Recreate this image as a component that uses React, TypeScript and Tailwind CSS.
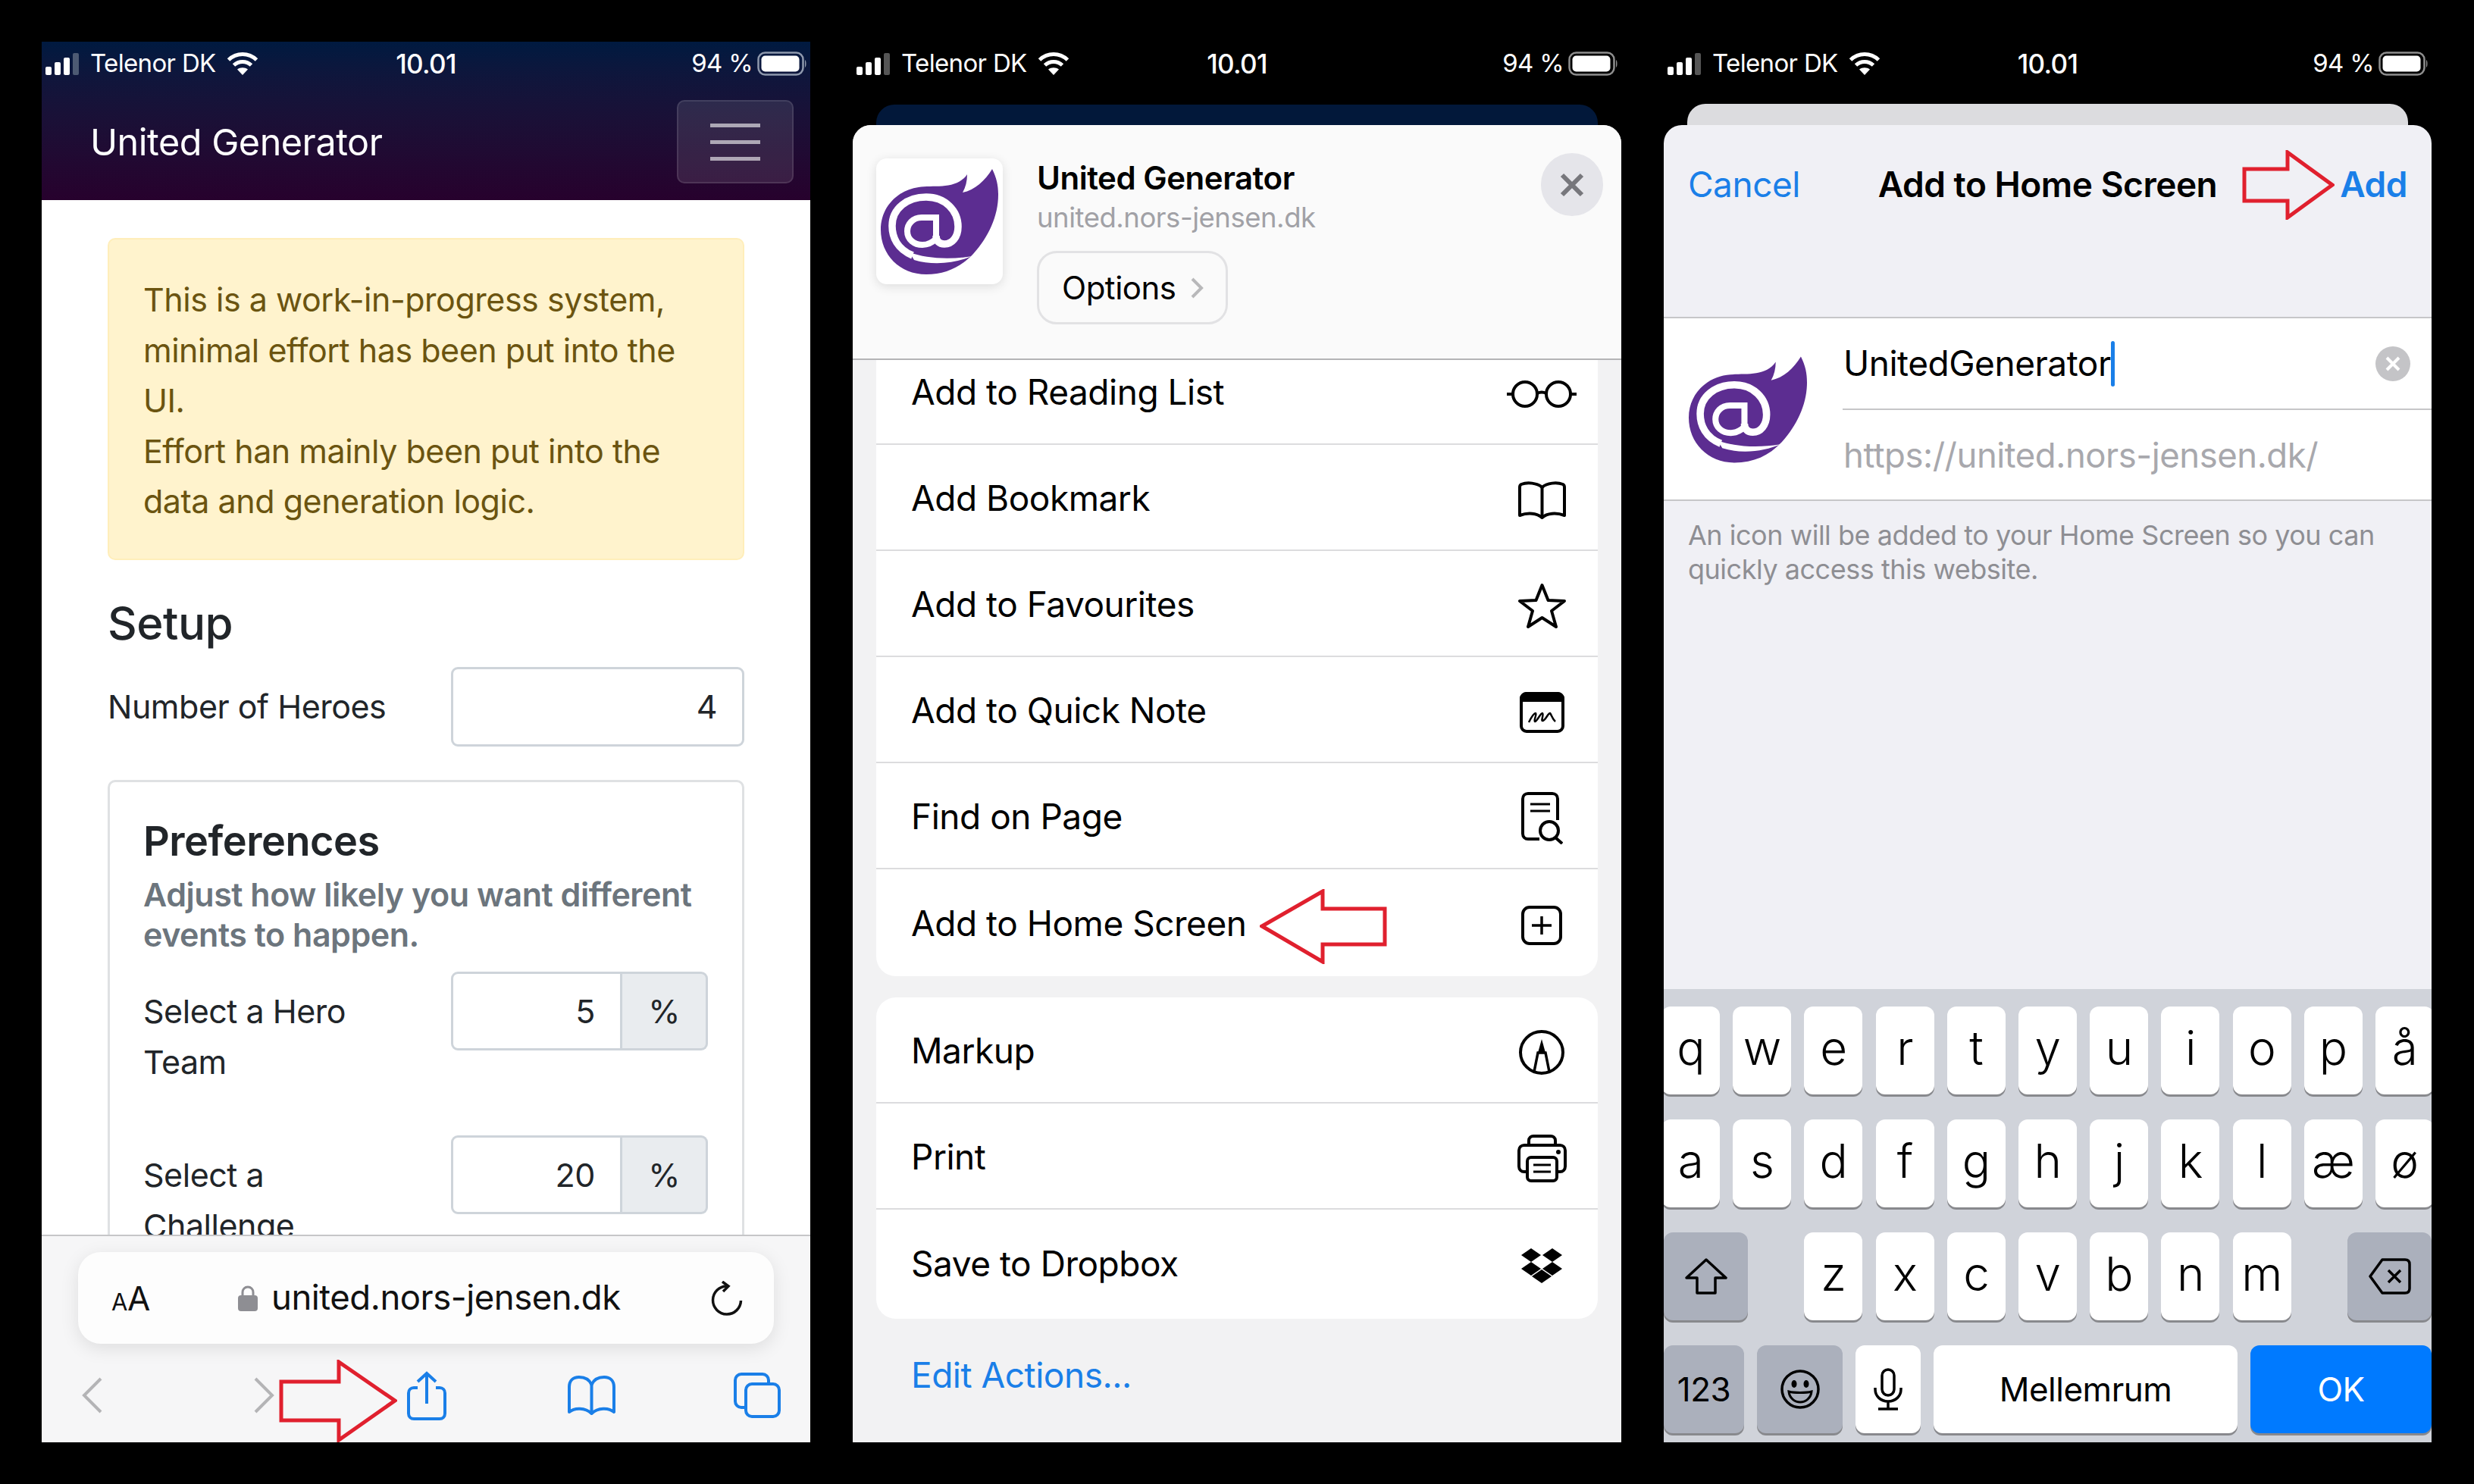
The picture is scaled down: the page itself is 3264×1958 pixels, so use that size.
import type { ReactNode } from "react";

function Signal({ dim }: { dim: string }) {
  return (
    <svg width="48" height="32" viewBox="0 0 48 32">
      <rect x="1" y="20" width="8" height="11" rx="2" fill="#fff" />
      <rect x="13" y="14" width="8" height="17" rx="2" fill="#fff" />
      <rect x="25" y="8" width="8" height="23" rx="2" fill="#fff" />
      <rect x="37" y="2" width="8" height="29" rx="2" fill={dim} />
    </svg>
  );
}

function Wifi() {
  return (
    <svg width="42" height="32" viewBox="0 0 42 32" fill="none" stroke="#fff" strokeWidth="5">
      <path d="M2.5 11 C13 1 29 1 39.5 11" />
      <path d="M9.5 18 C16 12 26 12 32.5 18" />
      <path d="M21 31 L14 23.5 C18 20.5 24 20.5 28 23.5 Z" fill="#fff" stroke="none" />
    </svg>
  );
}

function Battery({ ring }: { ring: string }) {
  return (
    <svg width="66" height="32" viewBox="0 0 66 32">
      <rect x="1.5" y="1.5" width="59" height="29" rx="9" fill="none" stroke={ring} strokeWidth="2.5" />
      <rect x="5.5" y="5.5" width="50" height="21" rx="5" fill="#fff" />
      <path d="M63 11 C65 12 65 20 63 21 Z" fill={ring} />
    </svg>
  );
}

function StatusBar({ dim, ring }: { dim: string; ring: string }) {
  return (
    <div className="grid h-[56px] shrink-0 grid-cols-3 items-center pt-[2px] text-[33px] tracking-[-0.02em] text-white">
      <div className="flex items-center pl-[4px]">
        <Signal dim={dim} />
        <span className="ml-[12px]">Telenor DK</span>
        <span className="ml-[14px] flex">
          <Wifi />
        </span>
      </div>
      <div className="text-center text-[35px] font-medium">10.01</div>
      <div className="flex items-center justify-end pr-[4px]">
        <span className="mr-[6px]">94 %</span>
        <Battery ring={ring} />
      </div>
    </div>
  );
}

function RedArrow({ points, w, h, className }: { points: string; w: number; h: number; className: string }) {
  return (
    <svg width={w} height={h} viewBox={`0 0 ${w} ${h}`} className={className} fill="none" stroke="#e0202e" strokeWidth="5">
      <polygon points={points} />
    </svg>
  );
}

function BlazorLogo({ className }: { className?: string }) {
  return (
    <svg viewBox="0 0 155 139" className={className}>
      <path
        d="M147 0 C153 12 155 22 155 34 C155 62 142 90 122 112 C105 130 85 139 60 139 C25 139 0 113 0 80 C0 50 22 28 50 24 C70 21 100 28 114 7 C114 16 112 24 108 31 C124 28 138 15 147 0 Z"
        fill="#5c2d91"
      />
      <g fill="none" stroke="#fff">
        <path d="M42 114 C22 106 15 90 15 75 C15 52 35 37 60 37 C85 37 102 55 102 76 C102 90 94 99 84 99 C77 99 73 95 73 88" strokeWidth="9.5" />
        <path d="M73 92 V64 H54 C42 64 35 73 35 82 C35 93 44 100 55 100 C62 100 68 97 73 92" strokeWidth="8" />
      </g>
      <path d="M120 115 C100 124 70 128 44 120 L38 110 C60 118 90 120 120 115 Z" fill="#fff" />
    </svg>
  );
}

function IconGlasses() {
  return (
    <svg width="92" height="38" viewBox="0 0 92 38" fill="none" stroke="#000" strokeWidth="4">
      <circle cx="24" cy="19" r="16" />
      <circle cx="68" cy="19" r="16" />
      <path d="M40 18 C44 16 48 16 52 18 M0 19 H8 M84 19 H92" />
    </svg>
  );
}

function IconBook() {
  return (
    <svg width="65" height="51" viewBox="0 0 65 51" fill="none" stroke="#000" strokeWidth="4" strokeLinejoin="round">
      <path d="M32.5 9 C26 3 13 2 5 5 C3 6 3 7 3 9 V46 C14 42 26 43 32.5 49 C39 43 51 42 62 46 V9 C62 7 62 6 60 5 C52 2 39 3 32.5 9 Z" />
      <path d="M32.5 9 V49" />
    </svg>
  );
}

function IconBookBlue() {
  return (
    <svg width="65" height="53" viewBox="0 0 65 53" fill="none" stroke="#1a7fe8" strokeWidth="4" strokeLinejoin="round">
      <path d="M32.5 12 C30 6 24 2 16 2 C8 2 3 7 3 15 V48 C10 42 24 42 32.5 50 C41 42 55 42 62 48 V15 C62 7 57 2 49 2 C41 2 35 6 32.5 12 Z" />
      <path d="M32.5 12 V50" />
    </svg>
  );
}

function IconStar() {
  return (
    <svg width="65" height="61" viewBox="0 0 65 61" fill="none" stroke="#000" strokeWidth="4" strokeLinejoin="round">
      <polygon points="32.5,3 40.5,23 62,24 45,37 51,58 32.5,46 14,58 20,37 3,24 24.5,23" />
    </svg>
  );
}

function IconNote() {
  return (
    <svg width="59" height="54" viewBox="0 0 59 54" fill="none" stroke="#000" strokeWidth="4">
      <rect x="2" y="2" width="55" height="50" rx="7" />
      <path d="M9 0 H50 C55 0 59 4 59 9 V13 H0 V9 C0 4 4 0 9 0 Z" fill="#000" stroke="none" />
      <path d="M12 40 C15 34 19 28 21 28 C23 29 18 38 20 39 C23 39 27 28 30 28 C32 29 28 38 30 38 C34 38 37 28 40 28 C42 30 43 36 47 39" strokeWidth="2.5" />
    </svg>
  );
}

function IconFind() {
  return (
    <svg width="55" height="69" viewBox="0 0 55 69" fill="none" stroke="#000" strokeWidth="4">
      <path d="M24 62 H9 C5 62 2 59 2 55 V9 C2 5 5 2 9 2 H41 C45 2 48 5 48 9 V37" />
      <path d="M12 16 H38 M12 25 H38" strokeWidth="3" />
      <circle cx="37" cy="51" r="12" />
      <path d="M45 60 L54 68" />
    </svg>
  );
}

function IconPlus() {
  return (
    <svg width="54" height="52" viewBox="0 0 54 52" fill="none" stroke="#000" strokeWidth="4">
      <rect x="2" y="2" width="50" height="48" rx="9" />
      <path d="M14 26 H40 M27 14 V38" strokeWidth="3.5" />
    </svg>
  );
}

function IconMarkup() {
  return (
    <svg width="60" height="59" viewBox="0 0 60 59" fill="none" stroke="#000" strokeWidth="4">
      <ellipse cx="30" cy="29.5" rx="28" ry="27.5" />
      <path d="M20 55 L25 30 H35 L40 55" strokeWidth="3.5" />
      <path d="M25 30 L30 12 L35 30 Z" fill="#000" stroke="none" />
    </svg>
  );
}

function IconPrint() {
  return (
    <svg width="65" height="63" viewBox="0 0 65 63" fill="none" stroke="#000" strokeWidth="4">
      <path d="M12 49 H9 C5 49 2 46 2 42 V21 C2 17 5 14 9 14 H56 C60 14 63 17 63 21 V42 C63 46 60 49 56 49 H53" />
      <path d="M15 14 V8 C15 4 18 2 21 2 H44 C47 2 50 4 50 8 V14" />
      <rect x="13" y="30" width="39" height="31" rx="5" fill="#fff" />
      <path d="M21 40 H44 M21 49 H44" strokeWidth="3" />
      <circle cx="54" cy="23" r="3" fill="#000" stroke="none" />
    </svg>
  );
}

function IconDropbox() {
  return (
    <svg width="56" height="46" viewBox="0 0 56 46" fill="#000">
      <polygon points="14,0 27,9 14,18 1,9" />
      <polygon points="42,0 55,9 42,18 29,9" />
      <polygon points="14,18 27,27 14,36 1,27" />
      <polygon points="42,18 55,27 42,36 29,27" />
      <polygon points="28,28 41,37 28,46 15,37" />
    </svg>
  );
}

function IconShare() {
  return (
    <svg width="52" height="65" viewBox="0 0 52 65" fill="none" stroke="#1a7fe8" strokeWidth="4">
      <path d="M14 22 H9 C5 22 2 25 2 29 V56 C2 60 5 63 9 63 H43 C47 63 50 60 50 56 V29 C50 25 47 22 43 22 H38" />
      <path d="M26 3 V43 M14 14 L26 3 L38 14" />
    </svg>
  );
}

function IconTabs() {
  return (
    <svg width="62" height="60" viewBox="0 0 62 60" fill="none" stroke="#1a7fe8" strokeWidth="4">
      <rect x="2" y="2" width="44" height="44" rx="8" />
      <rect x="16" y="15" width="44" height="43" rx="8" fill="#f6f6f7" />
    </svg>
  );
}

function IconReload() {
  return (
    <svg width="42" height="46" viewBox="0 0 42 46" fill="none" stroke="#111" strokeWidth="3.5">
      <path d="M21 7 A18.5 18.5 0 1 0 39.5 26" />
      <path d="M15 1 L23 7 L16 14" />
    </svg>
  );
}

function IconChevron({ flip }: { flip?: boolean }) {
  return (
    <svg width="28" height="50" viewBox="0 0 28 50" fill="none" stroke="#b4b4b6" strokeWidth="4">
      <path d={flip ? "M3 3 L25 25 L3 47" : "M25 3 L3 25 L25 47"} />
    </svg>
  );
}

function IconLock() {
  return (
    <svg width="26" height="34" viewBox="0 0 26 34" fill="none">
      <path d="M6 15 V9 C6 5 9 2 13 2 C17 2 20 5 20 9 V15" stroke="#8e8e93" strokeWidth="3" />
      <rect x="0" y="13" width="26" height="21" rx="4" fill="#8e8e93" />
    </svg>
  );
}

function IconShift() {
  return (
    <svg width="56" height="48" viewBox="0 0 56 48" fill="none" stroke="#000" strokeWidth="3.5" strokeLinejoin="round">
      <path d="M28 2 L54 26 H40 V46 H16 V26 H2 Z" />
    </svg>
  );
}

function IconDelete() {
  return (
    <svg width="56" height="48" viewBox="0 0 56 48" fill="none" stroke="#000" strokeWidth="3.5" strokeLinejoin="round">
      <path d="M18 2 H48 C52 2 54 4 54 8 V40 C54 44 52 46 48 46 H18 L2 24 Z" />
      <path d="M26 16 L42 32 M42 16 L26 32" />
    </svg>
  );
}

function IconEmoji() {
  return (
    <svg width="52" height="52" viewBox="0 0 52 52" fill="none" stroke="#000" strokeWidth="3.5">
      <circle cx="26" cy="26" r="24" />
      <ellipse cx="18" cy="19" rx="3.5" ry="5" fill="#000" stroke="none" />
      <ellipse cx="34" cy="19" rx="3.5" ry="5" fill="#000" stroke="none" />
      <path d="M11 29 C18 31 34 31 41 29 C40 38 33 43 26 43 C19 43 12 38 11 29 Z" strokeWidth="3" />
    </svg>
  );
}

function IconMic() {
  return (
    <svg width="38" height="56" viewBox="0 0 38 56" fill="none" stroke="#000" strokeWidth="3.5">
      <rect x="11" y="2" width="16" height="34" rx="8" />
      <path d="M2 26 V28 C2 37 9 44 19 44 C29 44 36 37 36 28 V26 M19 44 V54 M6 54 H32" />
    </svg>
  );
}

function SafariPhone() {
  return (
    <div className="relative flex h-[1848px] w-[1014px] flex-col overflow-hidden">
      <div className="flex h-[209px] shrink-0 flex-col bg-gradient-to-b from-[#001a40] to-[#27012d]">
        <StatusBar dim="#4d5a73" ring="#8f99ad" />
        <div className="flex flex-1 items-start justify-between pl-[64px] pr-[22px] pt-[21px]">
          <span className="mt-[26px] text-[48.5px] leading-[60px] text-white">United Generator</span>
          <div className="flex h-[110px] w-[154px] flex-col items-center justify-center gap-[17px] rounded-[10px] border-2 border-white/10 bg-white/10">
            <span className="h-[5px] w-[66px] bg-white/60" />
            <span className="h-[5px] w-[66px] bg-white/60" />
            <span className="h-[5px] w-[66px] bg-white/60" />
          </div>
        </div>
      </div>

      <div className="h-[1365px] shrink-0 overflow-hidden bg-white px-[87px] pt-[50px] text-[43px] text-[#212529]">
        <div className="h-[425px] rounded-[10px] border-2 border-[#ffeeba] bg-[#fff3cd] px-[45px] pt-[46px] leading-[66.5px] text-[#6b5410]">
          This is a work-in-progress system, minimal effort has been put into the UI.
          <br />
          Effort han mainly been put into the data and generation logic.
        </div>
        <h3 className="mt-[47px] text-[60px] font-medium leading-[72px]">Setup</h3>
        <div className="mt-[22px] flex items-center">
          <span className="w-[453px]">Number of Heroes</span>
          <div className="flex h-[105px] flex-1 items-center justify-end rounded-[9px] border-[3px] border-[#ced4da] pr-[33px]">4</div>
        </div>
        <div className="mt-[44px] h-[700px] rounded-[10px] border-[3px] border-[#dfe1e3] pl-[44px] pr-[45px] pt-[44px]">
          <h4 className="text-[54px] font-semibold leading-[68px]">Preferences</h4>
          <p className="mt-[10px] text-[43px] font-semibold leading-[53px] text-[#6c757d]">
            Adjust how likely you want different events to happen.
          </p>
          <div className="mt-[22px] flex flex-col gap-[63px]">
            <PercentRow label="Select a Hero Team" value="5" />
            <PercentRow label="Select a Challenge" value="20" />
          </div>
        </div>
      </div>

      <div className="flex-1 border-t-2 border-[#c6c6c8] bg-[#f6f6f7]">
        <div className="mx-[48px] mt-[21px] flex h-[121px] items-center rounded-[30px] bg-[#fdfdfd] pl-[44px] pr-[41px] shadow-[0_6px_24px_rgba(0,0,0,0.1)]">
          <span className="flex w-[167px] items-baseline text-[#111]">
            <span className="text-[31px]">A</span>
            <span className="text-[44px]">A</span>
          </span>
          <IconLock />
          <span className="ml-[18px] text-[45.5px] text-[#111]">united.nors-jensen.dk</span>
          <span className="ml-auto flex">
            <IconReload />
          </span>
        </div>
        <div className="flex h-[130px] items-center pl-[53px] pt-[6px]">
          <IconChevron />
          <span className="ml-[198px] flex">
            <IconChevron flip />
          </span>
          <span className="ml-[175px] flex">
            <IconShare />
          </span>
          <span className="ml-[159px] flex">
            <IconBookBlue />
          </span>
          <span className="ml-[155px] flex">
            <IconTabs />
          </span>
        </div>
      </div>

      <RedArrow
        w={156}
        h={109}
        className="absolute left-[313px] top-[1739px]"
        points="3,29 79,29 79,3 153,54 79,106 79,80 3,80"
      />
    </div>
  );
}

function PercentRow({ label, value }: { label: string; value: string }) {
  return (
    <div className="flex items-start">
      <span className="w-[406px] pr-[130px] pt-[19px] leading-[67px]">{label}</span>
      <div className="flex h-[104px] w-[339px] shrink-0">
        <div className="flex w-[226px] items-center justify-end rounded-l-[9px] border-[3px] border-[#ced4da] pr-[33px]">{value}</div>
        <div className="flex flex-1 items-center justify-center rounded-r-[9px] border-[3px] border-l-0 border-[#ced4da] bg-[#e9ecef]">%</div>
      </div>
    </div>
  );
}

function ActionRow({ label, icon }: { label: string; icon: ReactNode }) {
  return (
    <div className="flex h-[140px] items-center justify-between border-b-2 border-[#dcdcde] pl-[46px] pr-[28px] pt-[3px] last:border-b-0">
      <span className="text-[46px] text-black">{label}</span>
      <span className="mt-[4px] flex w-[92px] justify-center">{icon}</span>
    </div>
  );
}

function ShareSheetPhone() {
  return (
    <div className="relative flex h-[1848px] w-[1014px] flex-col overflow-hidden">
      <StatusBar dim="#555" ring="#8e8e8e" />
      <div className="mx-[31px] mt-[27px] h-[40px] shrink-0 rounded-t-[24px] bg-[#02183a]" />
      <div className="-mt-[13px] flex flex-1 flex-col overflow-hidden rounded-t-[24px] bg-[#f2f2f3]">
        <div className="relative flex h-[310px] shrink-0 items-start border-b-2 border-[#b4b4b6] bg-[#fafafa] pl-[31px] pt-[44px]">
          <div className="flex h-[166px] w-[167px] items-center justify-center rounded-[14px] bg-white shadow-[0_3px_14px_rgba(0,0,0,0.12)]">
            <BlazorLogo className="h-[139px] w-[155px]" />
          </div>
          <div className="ml-[45px]">
            <div className="text-[42px] font-semibold leading-[52px] text-black">United Generator</div>
            <div className="text-[36.5px] leading-[52px] text-[#a1a1a6]">united.nors-jensen.dk</div>
            <div className="mt-[18px] flex h-[97px] w-[252px] items-center rounded-[26px] border-[3px] border-[#e2e2e4] pl-[30px] text-[42px] text-black">
              Options
              <svg width="18" height="30" viewBox="0 0 18 30" fill="none" stroke="#b8b8ba" strokeWidth="4" className="ml-[18px]">
                <path d="M3 3 L15 15 L3 27" />
              </svg>
            </div>
          </div>
          <div className="ml-auto mr-[24px] -mt-[7px] flex h-[83px] w-[82px] items-center justify-center rounded-full bg-[#e5e5ea]">
            <svg width="34" height="34" viewBox="0 0 34 34" fill="none" stroke="#77777c" strokeWidth="6">
              <path d="M4 4 L30 30 M30 4 L4 30" />
            </svg>
          </div>
        </div>

        <div className="flex flex-1 flex-col px-[31px]">
          <div className="h-[813px] shrink-0 overflow-hidden rounded-b-[26px] bg-white">
            <div className="-mt-[28px]">
              <ActionRow label="Add to Reading List" icon={<IconGlasses />} />
              <ActionRow label="Add Bookmark" icon={<IconBook />} />
              <ActionRow label="Add to Favourites" icon={<IconStar />} />
              <ActionRow label="Add to Quick Note" icon={<IconNote />} />
              <ActionRow label="Find on Page" icon={<IconFind />} />
              <ActionRow label="Add to Home Screen" icon={<IconPlus />} />
            </div>
          </div>
          <div className="mt-[28px] h-[424px] shrink-0 overflow-hidden rounded-[26px] bg-white">
            <ActionRow label="Markup" icon={<IconMarkup />} />
            <ActionRow label="Print" icon={<IconPrint />} />
            <ActionRow label="Save to Dropbox" icon={<IconDropbox />} />
          </div>
          <div className="mt-[46px] pl-[46px] text-[46px] leading-[56px] text-[#1a7fe8]">Edit Actions...</div>
        </div>
      </div>

      <RedArrow
        w={168}
        h={99}
        className="absolute left-[537px] top-[1118px]"
        points="3,49 83,3 83,26 165,26 165,73 83,73 83,96"
      />
    </div>
  );
}

const ROW_1 = ["q", "w", "e", "r", "t", "y", "u", "i", "o", "p", "å"];
const ROW_2 = ["a", "s", "d", "f", "g", "h", "j", "k", "l", "æ", "ø"];
const ROW_3 = ["z", "x", "c", "v", "b", "n", "m"];

const keyBase = "flex h-[116px] items-center justify-center rounded-[12px] shadow-[0_3px_0_#88898d]";

function LetterKey({ ch }: { ch: string }) {
  return <div className={`${keyBase} w-[77px] shrink-0 bg-white pb-[8px] text-[62px] font-light text-black`}>{ch}</div>;
}

function AddHomePhone() {
  return (
    <div className="relative flex h-[1848px] w-[1013px] flex-col overflow-hidden">
      <StatusBar dim="#555" ring="#8e8e8e" />
      <div className="mx-[31px] mt-[26px] h-[40px] shrink-0 rounded-t-[24px] bg-[#dcdcdf]" />
      <div className="-mt-[12px] flex h-[1140px] shrink-0 flex-col rounded-t-[24px] bg-[#f0f0f5]">
        <div className="grid h-[253px] grid-cols-[1fr_auto_1fr] items-start px-[32px] pt-[50px] text-[46px] leading-[56px]">
          <span className="text-[#1a7fe8]">Cancel</span>
          <span className="font-semibold text-black">Add to Home Screen</span>
          <span className="text-right font-semibold text-[#1a7fe8]">Add</span>
        </div>
        <div className="flex h-[243px] border-y-2 border-[#c6c6c8] bg-white">
          <div className="flex w-[236px] shrink-0 items-center pl-[33px] pt-[2px]">
            <BlazorLogo className="h-[143px] w-[156px]" />
          </div>
          <div className="flex flex-1 flex-col">
            <div className="flex h-[121px] items-center border-b-2 border-[#c6c6c8] pl-[1px] pr-[28px] text-[46px] text-black">
              UnitedGenerator
              <span className="h-[60px] w-[5px] rounded-full bg-[#1a7fe8]" />
              <span className="ml-auto flex h-[46px] w-[46px] items-center justify-center rounded-full bg-[#c4c4c7]">
                <svg width="20" height="20" viewBox="0 0 20 20" fill="none" stroke="#fff" strokeWidth="4">
                  <path d="M2 2 L18 18 M18 2 L2 18" />
                </svg>
              </span>
            </div>
            <div className="flex flex-1 items-center pl-[1px] pt-[3px] text-[45.5px] text-[#a8a8ad]">https://united.nors-jensen.dk/</div>
          </div>
        </div>
        <p className="px-[32px] pt-[23px] text-[36px] leading-[45px] text-[#8e8e93]">
          An icon will be added to your Home Screen so you can quickly access this website.
        </p>
      </div>

      <div className="flex flex-1 flex-col gap-[33px] overflow-hidden bg-[#d0d3da] pt-[23px]">
        <div className="flex justify-center gap-[17.2px]">
          {ROW_1.map((k) => (
            <LetterKey key={k} ch={k} />
          ))}
        </div>
        <div className="flex justify-center gap-[17.2px]">
          {ROW_2.map((k) => (
            <LetterKey key={k} ch={k} />
          ))}
        </div>
        <div className="flex items-center justify-between">
          <div className={`${keyBase} w-[111px] bg-[#abb0bc]`}>
            <IconShift />
          </div>
          <div className="flex gap-[17.2px]">
            {ROW_3.map((k) => (
              <LetterKey key={k} ch={k} />
            ))}
          </div>
          <div className={`${keyBase} w-[111px] bg-[#abb0bc]`}>
            <IconDelete />
          </div>
        </div>
        <div className="flex gap-[17px]">
          <div className={`${keyBase} w-[106px] bg-[#abb0bc] text-[44px] text-black`}>123</div>
          <div className={`${keyBase} w-[113px] bg-[#abb0bc]`}>
            <IconEmoji />
          </div>
          <div className={`${keyBase} w-[86px] bg-white`}>
            <IconMic />
          </div>
          <div className={`${keyBase} w-[401px] bg-white text-[44px] text-black`}>Mellemrum</div>
          <div className={`${keyBase} flex-1 bg-[#007aff] text-[44px] text-white`}>OK</div>
        </div>
      </div>

      <RedArrow
        w={122}
        h={92}
        className="absolute left-[763px] top-[143px]"
        points="3,25 60,25 60,3 119,46 60,89 60,67 3,67"
      />
    </div>
  );
}

export default function App() {
  return (
    <div className="flex h-[1958px] w-[3264px] gap-[56px] overflow-hidden bg-black pl-[55px] pt-[55px] tracking-[-0.03em] [font-family:Inter,sans-serif]">
      <SafariPhone />
      <ShareSheetPhone />
      <AddHomePhone />
    </div>
  );
}
